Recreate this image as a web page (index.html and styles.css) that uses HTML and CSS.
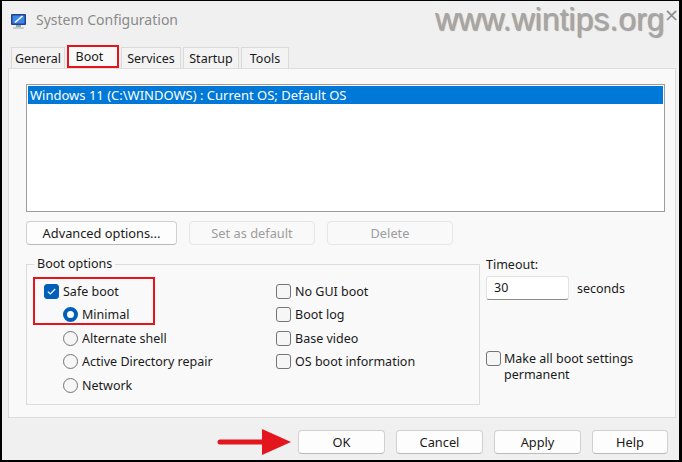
FILE: index.html
```html
<!DOCTYPE html>
<html>
<head>
<meta charset="utf-8">
<link rel="stylesheet" href="styles.css">
</head>
<body>
<div class="window">
  <div class="titlebar">
    <svg class="app-icon" width="17" height="17" viewBox="0 0 17 17">
      <rect x="1" y="1" width="15" height="11" rx="1" fill="#23408e"/>
      <rect x="2.5" y="2.5" width="12" height="8" fill="#3b86e6"/>
      <path d="M5 9.5 L12.5 3" stroke="#ffffff" stroke-width="1.6"/>
      <rect x="6" y="12" width="5" height="2" fill="#9aa3ad"/>
      <rect x="3" y="14" width="11" height="2" rx="1" fill="#c4cad1"/>
    </svg>
    <span class="title">System Configuration</span>
    <span class="watermark">www.wintips.org</span>
    <span class="close">×</span>
  </div>
  <div class="tabs">
    <div class="tab t-general">General</div>
    <div class="tab t-boot active">Boot</div>
    <div class="tab t-services">Services</div>
    <div class="tab t-startup">Startup</div>
    <div class="tab t-tools">Tools</div>
  </div>
  <div class="panel">
    <div class="listbox">
      <div class="row selected">Windows 11 (C:\WINDOWS) : Current OS; Default OS</div>
    </div>
    <div class="btnrow">
      <button class="btn adv">Advanced options...</button>
      <button class="btn dis">Set as default</button>
      <button class="btn dis">Delete</button>
    </div>
    <div class="lower">
      <fieldset class="group">
        <legend>Boot options</legend>
        <div class="cols">
          <div class="col left">
            <div class="annot"></div>
            <div class="opt"><span class="cb checked"><svg width="15" height="15" viewBox="0 0 15 15"><path d="M3.8 7.6 L6.3 10 L11.2 5" fill="none" stroke="#fff" stroke-width="1.1"/></svg></span>Safe boot</div>
            <div class="opt sub"><span class="rb checked"></span>Minimal</div>
            <div class="opt sub"><span class="rb"></span>Alternate shell</div>
            <div class="opt sub"><span class="rb"></span>Active Directory repair</div>
            <div class="opt sub"><span class="rb"></span>Network</div>
          </div>
          <div class="col right">
            <div class="opt"><span class="cb"></span>No GUI boot</div>
            <div class="opt"><span class="cb"></span>Boot log</div>
            <div class="opt"><span class="cb"></span>Base video</div>
            <div class="opt"><span class="cb"></span>OS boot information</div>
          </div>
        </div>
      </fieldset>
      <div class="timeout">
        <div class="tlabel">Timeout:</div>
        <div class="trow"><div class="input">30</div><span class="secs">seconds</span></div>
        <div class="perm"><span class="cb"></span><span class="ptext"><span class="pline">Make all boot settings</span><span class="pline">permanent</span></span></div>
      </div>
    </div>
  </div>
  <div class="footer">
    <svg class="arrow" width="76" height="26" viewBox="0 0 76 26">
      <path d="M4 10.5 H50 V15.5 H4 A2.5 2.5 0 0 1 4 10.5 Z" fill="#e3161e"/>
      <path d="M46 0 L75 13 L46 26 Z" fill="#e3161e"/>
    </svg>
    <button class="btn fb">OK</button>
    <button class="btn fb">Cancel</button>
    <button class="btn fb">Apply</button>
    <button class="btn fb help">Help</button>
  </div>
</div>
</body>
</html>
```
FILE: styles.css
```css
html, body { margin: 0; padding: 0; }
body { font-family: "Noto Sans", "Open Sans", sans-serif; font-size: 12.5px; color: #1a1a1a; }

.window {
  width: 682px; height: 462px; box-sizing: border-box;
  border-style: solid; border-color: #000; border-width: 1px 3px 2px 2px;
  background: #f0f0f0; display: flex; flex-direction: column; overflow: hidden;
}

.titlebar { height: 39px; display: flex; align-items: center; padding-left: 8px; position: relative; }
.app-icon { flex: none; margin-top: 1px; }
.title { margin-left: 9px; font-size: 14px; color: #8a8a8a; margin-top: -3px; }
.watermark {
  position: absolute; left: 433px; top: 0px;
  font-family: "Liberation Sans", Arial, sans-serif; font-size: 32px; color: #a6a6a6;
  text-shadow: 1px 1px 1px rgba(0,0,0,0.35);
}
.close { position: absolute; left: 662px; top: 3px; font-size: 18px; line-height: 22px; color: #8c8c8c; font-family: "DejaVu Sans", sans-serif; }

.tabs { display: flex; align-items: flex-end; height: 23px; margin-top: 5px; padding-left: 9px; gap: 2px; }
.tab {
  height: 21px; box-sizing: border-box; border: 1px solid #dadada; border-bottom: none;
  background: #f3f3f3; display: flex; align-items: center; justify-content: center;
  font-size: 12.5px; color: #1a1a1a;
}
.t-general { width: 54px; }
.t-boot { width: 52px; }
.t-services { width: 60px; }
.t-startup { width: 56px; }
.t-tools { width: 48px; }
.tab.active { height: 23px; border: 2px solid #e3141c; background: #f9f9f9; align-items: flex-start; padding: 1px 7px 0 0; }

.panel {
  margin: 0 3px 0 6px; height: 350px; box-sizing: border-box;
  border: 1px solid #dcdcdc; background: #f9f9f9; padding: 15px 0 0 17px;
}
.listbox { width: 639px; height: 128px; box-sizing: border-box; border: 1px solid #9c9c9c; background: #fff; padding: 1px; }
.row { height: 18px; line-height: 18px; padding-left: 2px; white-space: nowrap; font-size: 13px; }
.row.selected { background: #0078d7; color: #fff; }

.btnrow { display: flex; gap: 12px; margin-top: 9px; }
.btn {
  height: 24px; box-sizing: border-box; border: 1px solid #d0d0d0; border-bottom-color: #bababa;
  border-radius: 4px; background: #fdfdfd; font-family: inherit; font-size: 12.8px; color: #1a1a1a;
  padding: 0; margin: 0;
}
.adv { width: 151px; }
.dis { width: 126px; color: #9d9d9d; background: #f9f9f9; border-color: #e6e6e6; }

.lower { display: flex; margin-top: 11px; }
.group {
  margin: 0; padding: 0; width: 454px; height: 149px; box-sizing: border-box;
  border: 1px solid #dcdcdc; min-width: 0;
}
.group legend { padding: 0 3px; margin-left: 7px; line-height: 16px; font-size: 12.5px; }
.cols { display: grid; grid-template-columns: 249px 1fr; }
.col { padding-top: 7.5px; }
.col.left { position: relative; }
.annot { position: absolute; left: 6px; top: 5px; width: 122px; height: 48px; box-sizing: border-box; border: 2px solid #e3141c; }
.opt { height: 23.5px; display: flex; align-items: center; white-space: nowrap; }
.col.left .opt { padding-left: 17px; }
.col.left .opt.sub { padding-left: 36px; }

.cb {
  width: 15px; height: 15px; box-sizing: border-box; border: 1px solid #757575; border-radius: 3px;
  background: #f6f6f6; margin-right: 4px; flex: none; display: block;
}
.cb svg { display: block; margin: -1px; }
.cb.checked { background: #005fb8; border-color: #005fb8; }
.rb {
  width: 15px; height: 15px; box-sizing: border-box; border: 1px solid #757575; border-radius: 50%;
  background: #f6f6f6; margin-right: 4px; flex: none; display: block;
}
.rb.checked { background: #fff; border: 4.5px solid #005fb8; }

.timeout { margin-left: 6px; display: flex; flex-direction: column; }
.tlabel { line-height: 16px; margin-top: 1px; }
.trow { display: flex; align-items: center; margin-top: 3px; }
.input {
  width: 83px; height: 24px; box-sizing: border-box; background: #fff; border: 1px solid #e2e2e2;
  border-bottom-color: #8a8a8a; border-radius: 3px; padding-left: 7px; line-height: 22px;
}
.secs { margin-left: 8px; }
.perm { display: flex; align-items: flex-start; margin-top: 51px; }
.perm .cb { margin-right: 3px; }
.ptext { display: flex; flex-direction: column; }
.pline { display: block; height: 16px; line-height: 16px; }

.footer { display: flex; align-items: center; justify-content: flex-end; gap: 11px; padding-top: 11px; padding-right: 11px; }
.arrow { margin-right: -5px; display: block; }
.fb { width: 87px; }
.help { width: 76px; }
```
